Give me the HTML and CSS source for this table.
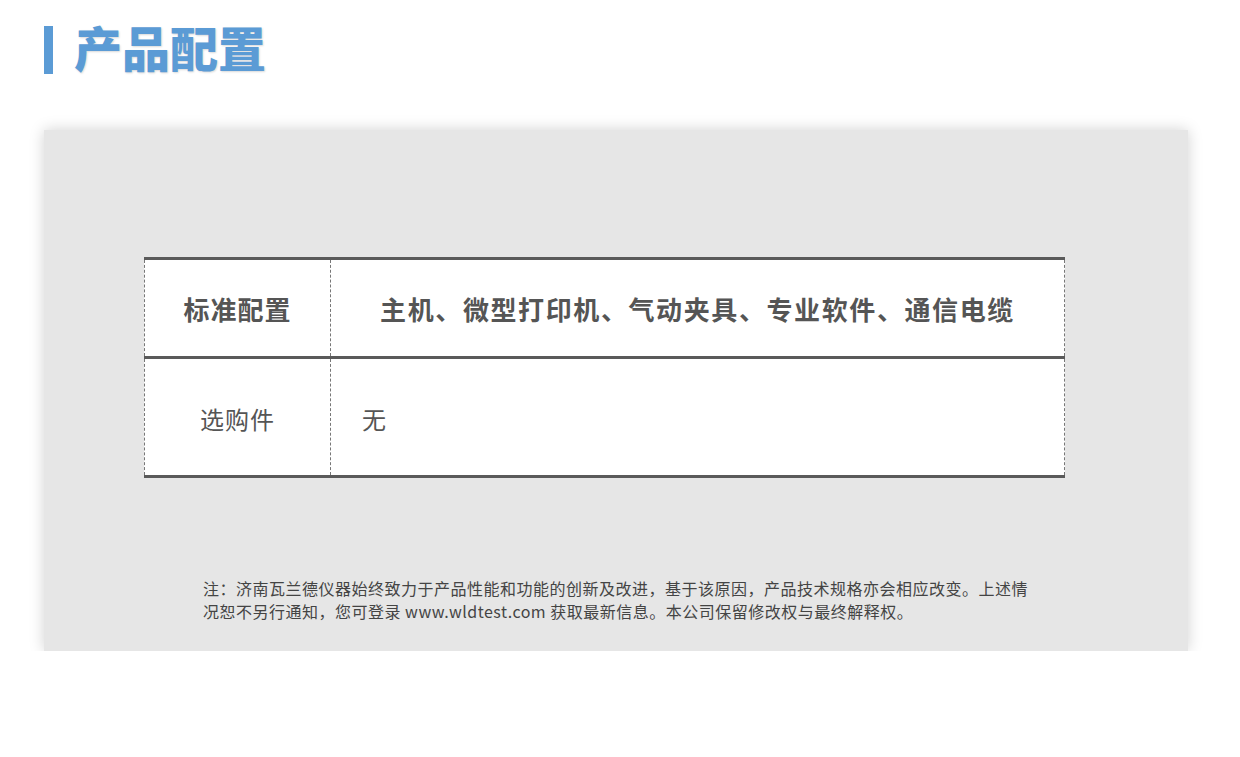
FILE: index.html
```html
<!DOCTYPE html>
<html lang="zh-CN">
<head>
    <meta charset="UTF-8">
    <meta name="viewport" content="width=device-width, initial-scale=1.0">
    <title>产品配置</title>
    <link rel="stylesheet" href="styles.css">
</head>
<body>
    <div class="page-title">
        <span class="title-bar"></span>
        <h1>产品配置</h1>
    </div>

    <div class="panel">
        <table class="config-table">
            <tr class="row-main">
                <th class="col-label">标准配置</th>
                <th class="col-value">主机、微型打印机、气动夹具、专业软件、通信电缆</th>
            </tr>
            <tr class="row-option">
                <td class="col-label">选购件</td>
                <td class="col-value">无</td>
            </tr>
        </table>

        <p class="note">注：济南瓦兰德仪器始终致力于产品性能和功能的创新及改进，基于该原因，产品技术规格亦会相应改变。上述情<br>况恕不另行通知，您可登录 www.wldtest.com 获取最新信息。本公司保留修改权与最终解释权。</p>
    </div>
</body>
</html>
```

FILE: styles.css
```css
body {
    margin: 0;
    background-color: #fff;
    font-family: "Noto Sans CJK SC", "Noto Sans", sans-serif;
    color: #555;
}

.page-title {
    display: flex;
    align-items: center;
    padding: 22px 0 0 44px;
    height: 56px;
}

.title-bar {
    width: 9px;
    height: 48px;
    background-color: #5b9bd5;
    margin-right: 21px;
}

.page-title h1 {
    margin: -8px 0 0 0;
    font-size: 48px;
    font-weight: 900;
    line-height: 56px;
    color: #5b9bd5;
    text-shadow: 1px 1px 2px rgba(0,0,0,0.15);
}

.panel {
    margin: 52px 52px 0 44px;
    height: 521px;
    background-color: #e6e6e6;
    box-shadow: 0px 0px 14px rgba(0,0,0,0.18);
    padding: 127px 0 0 100px;
    box-sizing: border-box;
}

.config-table {
    width: 921px;
    border-collapse: collapse;
    background-color: #fff;
    border-left: 1px dashed #777;
    border-right: 1px dashed #777;
}

.config-table tr {
    border-top: 3px solid #5a5a5a;
    border-bottom: 3px solid #5a5a5a;
}

.config-table th,
.config-table td {
    padding: 0;
    text-align: center;
    color: #555;
}

.config-table .col-label {
    width: 185px;
    border-right: 1px dashed #777;
}

.row-main {
    height: 99px;
}

.row-main th {
    font-size: 26px;
    font-weight: bold;
    letter-spacing: 1px;
}

.row-main .col-value {
    letter-spacing: 1.6px;
}

.row-option {
    height: 119px;
}

.row-option td {
    font-size: 24px;
    letter-spacing: 1px;
    padding-top: 2px;
}

.row-option .col-value {
    text-align: left;
    padding-left: 31px;
}

.note {
    margin: 99px 0 0 59px;
    font-size: 16px;
    line-height: 23px;
    letter-spacing: 0.5px;
    color: #444;
}
```
